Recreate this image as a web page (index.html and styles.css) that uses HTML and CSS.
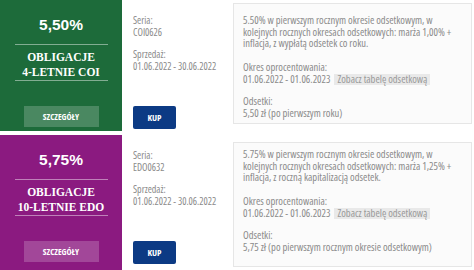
FILE: index.html
```html
<!DOCTYPE html>
<html>
<head>
<meta charset="utf-8">
<title>Obligacje</title>
<link rel="stylesheet" href="styles.css">
</head>
<body>

<div class="offer coi">
  <div class="offer-side">
    <div class="rate">5,50%</div>
    <div class="name">OBLIGACJE<br>4-LETNIE COI</div>
    <a class="more" href="#">SZCZEGÓŁY</a>
  </div>
  <div class="offer-meta">
    <div class="label">Seria:</div>
    <div class="value">COI0626</div>
    <div class="label gap">Sprzedaż:</div>
    <div class="value">01.06.2022 - 30.06.2022</div>
    <a class="buy" href="#">KUP</a>
  </div>
  <div class="offer-info">
    <p>5.50% w pierwszym rocznym okresie odsetkowym, w<br>
    kolejnych rocznych okresach odsetkowych: marża 1,00% +<br>
    inflacja, z wypłatą odsetek co roku.</p>
    <div class="label">Okres oprocentowania:</div>
    <div class="value">01.06.2022 - 01.06.2023 <span class="tag">Zobacz tabelę odsetkową</span></div>
    <div class="label gap">Odsetki:</div>
    <div class="value">5,50 zł (po pierwszym roku)</div>
  </div>
</div>

<div class="offer edo">
  <div class="offer-side">
    <div class="rate">5,75%</div>
    <div class="name">OBLIGACJE<br>10-LETNIE EDO</div>
    <a class="more" href="#">SZCZEGÓŁY</a>
  </div>
  <div class="offer-meta">
    <div class="label">Seria:</div>
    <div class="value">EDO0632</div>
    <div class="label gap">Sprzedaż:</div>
    <div class="value">01.06.2022 - 30.06.2022</div>
    <a class="buy" href="#">KUP</a>
  </div>
  <div class="offer-info">
    <p>5.75% w pierwszym rocznym okresie odsetkowym, w<br>
    kolejnych rocznych okresach odsetkowych: marża 1,25% +<br>
    inflacja, z roczną kapitalizacją odsetek.</p>
    <div class="label">Okres oprocentowania:</div>
    <div class="value">01.06.2022 - 01.06.2023 <span class="tag">Zobacz tabelę odsetkową</span></div>
    <div class="label gap">Odsetki:</div>
    <div class="value">5,75 zł (po pierwszym rocznym okresie odsetkowym)</div>
  </div>
</div>

</body>
</html>
```

FILE: styles.css
```css
BODY {
    margin : 0;
    background : #ffffff;
    font-family : "Open Sans", Roboto, sans-serif;
    font-stretch : 75%;
    font-size : 10px;
    color : #8a8a8a;
}
A {
    text-decoration : none;
}
.offer {
    display : flex;
    height : 131px;
    margin-bottom : 4px;
    background : #fff;
}
.edo {
    height : 135px;
}
.offer-side {
    width : 122px;
    flex-shrink : 0;
    display : flex;
    flex-direction : column;
    align-items : center;
    color : #fff;
}
.coi .offer-side {
    background : #1d6b3a;
}
.edo .offer-side {
    background : #8b1a80;
}
.rate {
    font-family : "Liberation Sans", Arial, sans-serif;
    font-stretch : normal;
    font-weight : bold;
    font-size : 15.5px;
    line-height : 20px;
    margin-top : 15px;
    padding-bottom : 9px;
    width : 93px;
    text-align : center;
    border-bottom : 1px solid rgba(255, 255, 255, 0.45);
}
.name {
    font-family : "Liberation Serif", "Times New Roman", serif;
    font-stretch : normal;
    font-weight : bold;
    font-size : 11.5px;
    line-height : 15px;
    width : 93px;
    white-space : nowrap;
    text-align : center;
    padding-top : 5px;
    border-bottom : 1px solid rgba(255, 255, 255, 0.45);
}
.more {
    display : block;
    margin-top : 25px;
    width : 75px;
    height : 21px;
    line-height : 21px;
    text-align : center;
    color : #fff;
    font-weight : bold;
    font-size : 8.5px;
    background : rgba(255, 255, 255, 0.2);
}
.offer-meta {
    width : 100px;
    flex-shrink : 0;
    padding : 15px 0 0 11px;
    display : flex;
    flex-direction : column;
    align-items : flex-start;
}
.label {
    line-height : 11px;
}
.value {
    line-height : 11px;
    margin-top : 1px;
}
.gap {
    margin-top : 11px;
}
.buy {
    margin-top : auto;
    margin-bottom : 2px;
    width : 43px;
    height : 23px;
    line-height : 23px;
    text-align : center;
    background : #0c3a84;
    border-radius : 2px;
    color : #fff;
    font-weight : bold;
    font-size : 9px;
}
.edo .buy {
    margin-bottom : 6px;
}
.offer-info {
    width : 221px;
    margin : 3px 0 7px 0;
    padding : 11px 7px 0 9px;
    background : #fbfbfb;
    border : 1px solid #e6e6e6;
    font-size : 10.5px;
}
.offer-info p {
    margin : 0 0 12px;
    line-height : 11.5px;
}
.tag {
    display : inline-block;
    margin-left : 2px;
    padding : 0 3px;
    line-height : 11px;
    background : #e9e9e9;
    color : #999;
}
.edo .offer-info {
    margin : 7px 0 3px 0;
    padding-top : 6px;
}
```
